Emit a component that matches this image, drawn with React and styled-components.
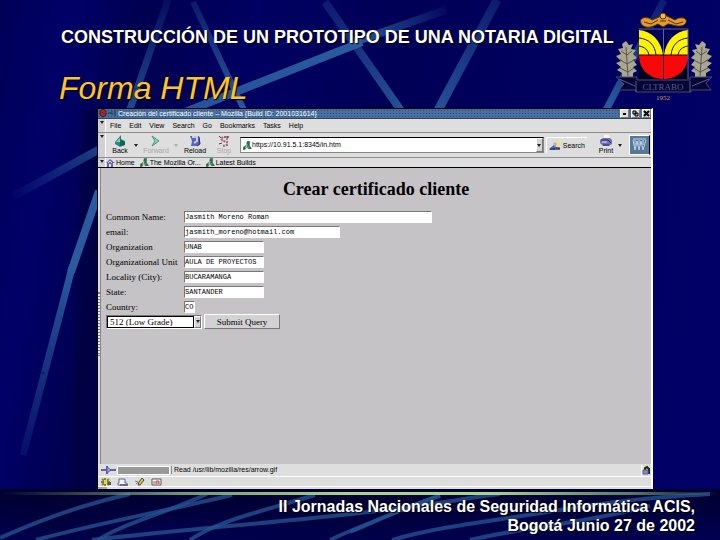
import React from 'react';
import styled, { createGlobalStyle } from 'styled-components';

const GlobalStyle = createGlobalStyle`
  * {
    box-sizing: border-box;
  }

  body {
    margin: 0;
    background: #000060;
    font-family: "Liberation Sans", Arial, sans-serif;
  }

  button, input, select {
    margin: 0;
    padding: 0;
    border-radius: 0;
    font: inherit;
    color: inherit;
  }
`;

const Slide = styled.main`
  display: flex;
  flex-direction: column;
  position: relative;
  isolation: isolate;
  min-height: 100vh;
  overflow: hidden;
  background: linear-gradient(100deg, #000058 0%, #000068 9%, #000050 18%, #000062 32%, #000056 50%, #000060 72%, #000068 100%);
`;

const Backdrop = styled.svg`
  position: absolute;
  inset: 0;
  width: 100%;
  height: 100%;
  z-index: -1;
`;

const Top = styled.header`
  display: flex;
  justify-content: space-between;
  padding: 12px 7px 4px 59px;
`;

const Headings = styled.div`
  flex: 1;
  padding-top: 14px;
  white-space: nowrap;
  text-shadow: 1px 1px 1px #000;
`;

const Heading = styled.h1`
  margin: 0 0 24px 2px;
  color: #fff;
  font-size: 18px;
  line-height: 22px;
`;

const Subheading = styled.h2`
  margin: 0;
  color: #ffc425;
  font-size: 32px;
  font-style: italic;
  font-weight: 400;
  line-height: 32px;
`;

const Crest = styled.svg`
  flex: none;
  width: 98px;
  height: 90px;
`;

/* Mozilla window */
const Window = styled.section`
  flex: 1;
  display: flex;
  flex-direction: column;
  margin: 0 67px 0 97px;
  border: 1px solid #000;
  border-right: 2px solid #fff;
  border-bottom: 0;
  background: #dedede;
  color: #000;
  font-size: 7px;
  line-height: 8px;
`;

const TitleBar = styled.div`
  display: flex;
  align-items: center;
  gap: 2px;
  height: 10px;
  padding-left: 1px;
  border-bottom: 1px solid #345;
  background-color: #476f9f;
  background-image: radial-gradient(#294f7f 30%, transparent 40%);
  background-size: 3px 3px;
  color: #fff;
`;

const WindowTitle = styled.span`
  flex: 1;
  white-space: nowrap;
`;

const WindowButton = styled.button`
  display: flex;
  width: 9px;
  height: 9px;
  border: 1px solid #777;
  border-top-color: #fff;
  border-left-color: #fff;
  background: #dedede;
`;

const Bar = styled.div`
  display: flex;
  align-items: center;
  height: ${({ $height }) => $height}px;
  border-bottom: 1px solid ${({ $line }) => $line || '#8c8c8c'};
  white-space: nowrap;
`;

const Grip = styled.span`
  display: flex;
  justify-content: center;
  align-self: stretch;
  flex: none;
  width: 8px;
  padding-top: 2px;
  border-right: 1px solid #fff;
  background: #d0d0d4;
`;

const Menu = styled.nav`
  display: flex;
  gap: 8px;
  padding-left: 4px;
`;

const PlainButton = styled.button`
  display: flex;
  align-items: center;
  gap: 2px;
  border: 0;
  background: none;
`;

const NavButton = styled(PlainButton)`
  flex-direction: column;
  gap: 0;
  width: ${({ $width }) => $width || 28}px;
  color: ${({ disabled }) => (disabled ? '#a8a8a8' : '#000')};
`;

const ArrowSlot = styled.span`
  display: flex;
  justify-content: center;
  width: ${({ $width }) => $width}px;
`;

const Address = styled.label`
  display: flex;
  align-items: center;
  flex: 1;
  height: 16px;
  margin-left: 4px;
  padding-left: 2px;
  border: 1px solid #888;
  border-top: 1px solid #000;
  background: #fff;
`;

const AddressInput = styled.input`
  flex: 1;
  min-width: 0;
  border: 0;
  outline: 0;
  background: none;
`;

const DropButton = styled.button`
  display: flex;
  align-items: center;
  justify-content: center;
  align-self: stretch;
  width: 7px;
  border: 1px solid #777;
  border-top-color: #fff;
  border-left-color: #fff;
  background: #d4d4d4;
`;

const SearchButton = styled(PlainButton)`
  height: 16px;
  margin: 0 8px 0 2px;
  padding: 0 2px;
  border-top: 1px solid #fff;
  border-left: 1px solid #fff;
`;

const Throbber = styled.span`
  display: flex;
  align-items: center;
  justify-content: center;
  width: 21px;
  height: 20px;
  margin: 0 1px 0 6px;
  border: 1px solid #fff;
  border-right: 1px solid #000;
  background: #56799b;
`;

const Bookmarks = styled.nav`
  display: flex;
  gap: 5px;
`;

const Bookmark = styled.a`
  display: flex;
  align-items: center;
  gap: 1px;
  color: #000;
  text-decoration: none;
`;

const Body = styled.div`
  flex: 1;
  display: flex;
`;

const Sidebar = styled.div`
  display: flex;
  align-items: center;
  width: 3px;
  border-right: 1px solid #888;
`;

const SidebarGrip = styled.span`
  width: 2px;
  height: 64px;
  margin-bottom: -16px;
  border-top: 1px solid #777;
  border-bottom: 1px solid #777;
  background: repeating-linear-gradient(#6f7590 0 1px, #eee 1px 3px);
`;

const Page = styled.div`
  flex: 1;
  padding: 11px 5px;
  background: #c5c3c5;
  font-family: "Liberation Serif", "Times New Roman", serif;
  font-size: 9px;
`;

const PageTitle = styled.h3`
  margin: 0 0 10px;
  font-size: 18px;
  line-height: 20px;
  text-align: center;
`;

const Field = styled.div`
  display: flex;
  align-items: center;
  height: 15px;
`;

const Label = styled.label`
  width: 78px;
  white-space: nowrap;
`;

const TextInput = styled.input`
  width: ${({ $width }) => $width}px;
  height: 12px;
  border: 1px solid #fff;
  border-top-color: #777;
  border-left-color: #777;
  background: #fff;
  font-family: "Liberation Mono", monospace;
  font-size: 7px;
  outline: 0;
`;

const Actions = styled.div`
  display: flex;
  align-items: center;
  gap: 2px;
`;

const SelectBox = styled.div`
  display: flex;
  height: 14px;
  border: 1px solid #777;
  border-right-color: #fff;
  border-bottom-color: #fff;
`;

const Select = styled.select`
  width: 87px;
  padding-left: 2px;
  border: 1px solid #000;
  background: #fff;
  appearance: none;
`;

const Submit = styled.button`
  width: 76px;
  height: 15px;
  border: 1px solid #777;
  border-top-color: #fff;
  border-left-color: #fff;
  background: #d2d2d2;
`;

const StatusBar = styled.div`
  display: flex;
  align-items: center;
  height: 13px;
  border-bottom: 1px solid #fff;
  white-space: nowrap;
`;

const Progress = styled.span`
  width: 53px;
  height: 9px;
  margin: 0 1px 0 0;
  border: 1px solid #fff;
  background: #999;
`;

const StatusText = styled.span`
  flex: 1;
  padding-left: 2px;
  border-left: 1px solid #888;
`;

const LockSlot = styled.span`
  display: flex;
  border-left: 1px solid #fff;
  background: #d5d5ec;
`;

const TaskBar = styled.div`
  display: flex;
  align-items: center;
  gap: 6px;
  height: 10px;
  padding-left: 2px;
  border-bottom: 1px solid #fff;
`;

const ResizeEdge = styled.div`
  height: 2px;
  border-left: 9px solid #a5a598;
  background: #dedede;
`;

const Rule = styled.hr`
  width: 100%;
  height: 3px;
  margin: 3px 0 0;
  border: 0;
  background: linear-gradient(90deg, transparent 0%, #6f986f 25%, #a6d48c 48%, #a6d48c 68%, #557a62 88%, transparent 100%);
`;

const Footer = styled.footer`
  padding: 2px 25px 5px;
  color: #fff;
  font-size: 16px;
  font-weight: 700;
  line-height: 19px;
  text-align: right;
  text-shadow: 1px 1px 1px #000;
`;

const rays = [
  { d: 'M168 0L129 112', w: 7, from: 0.15, to: 0.8 },
  { d: 'M193 2L245 112', w: 6, from: 0.3, to: 1 },
  { d: 'M446 10L360 40', w: 8, from: 0.1, to: 0.9 },
  { d: 'M362 42L185 112', w: 8, from: 1, to: 0.9 },
  { d: 'M100 149L14 196', w: 8, from: 0.7, to: 0.05 },
  { d: 'M325 2L402 112', w: 8, from: 0.3, to: 0.9 },
  { d: 'M497 0L437 112', w: 9, from: 0.3, to: 0.9 },
  { d: 'M664 0L605 112', w: 7, from: 0.3, to: 1 },
  { d: 'M99 191L71 272', w: 8, from: 1, to: 1 },
  { d: 'M72 268L23 455', w: 7, from: 1, to: 0.15 },
];

const lowRays = [
  'M0 538C40 520 80 505 130 494',
  'M36 540C90 525 170 510 232 495',
  'M98 540C120 525 160 515 207 494',
  'M92 540C180 530 270 523 360 513S450 500 500 494',
  'M190 540C220 520 260 512 315 495',
  'M330 540C350 530 390 515 440 495',
  'M392 540C440 526 500 520 560 510S660 497 710 494',
  'M470 540C520 528 580 524 650 506',
  'M350 532C390 515 410 505 440 496',
];

const Background = () => (
  <Backdrop viewBox="0 0 720 540" preserveAspectRatio="none" aria-hidden="true">
    <defs>
      {rays.map(({ d, from, to }, i) => {
        const [x1, y1, x2, y2] = d.match(/\d+/g);
        return (
          <linearGradient key={d} id={`ray${i}`} gradientUnits="userSpaceOnUse" x1={x1} y1={y1} x2={x2} y2={y2}>
            <stop offset="0" stopColor="#295b9e" stopOpacity={from} />
            <stop offset="1" stopColor="#295b9e" stopOpacity={to} />
          </linearGradient>
        );
      })}
      <linearGradient id="floor" x1="0" y1="0" x2="0" y2="1">
        <stop offset="0" stopColor="#000028" stopOpacity="0.9" />
        <stop offset="1" stopColor="#000040" stopOpacity="0.6" />
      </linearGradient>
    </defs>
    <path d="M82 110L97 108V490H70Z" fill="#000030" opacity="0.4" />
    {rays.map(({ d, w }, i) => (
      <path key={d} d={d} stroke={`url(#ray${i})`} strokeWidth={w} />
    ))}
    <path d="M37 373H45" stroke="#00104a" />
    <rect y="489" width="720" height="51" fill="url(#floor)" />
    {lowRays.map((d) => (
      <path key={d} d={d} fill="none" stroke="#24508f" strokeWidth="4" opacity="0.8" />
    ))}
  </Backdrop>
);

const Leaf = () => (
  <g>
    <path
      d="M10 1L13 5L17 4L15 9L20 10L17 14L21 18L17 20L21 25L17 27L21 31L17 33V37H6V33L1 30L5 27L0 23L5 21L0 16L5 14L2 9L7 8L6 4Z"
      fill="#aaa68f"
    />
    <path d="M10 7L12 36M5 11L11 15L16 11M3 19L11 24L18 20M4 28L12 32L18 28" fill="none" stroke="#55554e" />
  </g>
);

const UniversityCrest = () => (
  <Crest viewBox="0 0 98 90" role="img" aria-label="UNAB">
    <path d="M24 16H73V67H24Z" fill="#000018" />
    <path d="M24 17H73V43H24Z" fill="#00005c" />
    <path d="M24 18C36 19 46 28 48 43H24Z" fill="#fff200" />
    <path d="M73 18C61 19 51 28 49 43H73Z" fill="#fff200" />
    <path d="M24 26C34 27 40 33 41 43M24 34C30 35 33 38 34 43M73 26C63 27 57 33 56 43M73 34C67 35 64 38 63 43" fill="none" stroke="#111" />
    <path d="M24 43H73C73 58 62 67 48.500 67S24 58 24 43Z" fill="#f80808" />
    <path d="M24 43H73M48.500 17V67" stroke="#200010" />
    <path d="M24 17H73V67M48.500 17V42" fill="none" stroke="#6060a8" />
    <path d="M27 13C22 6 31 3 37 8L44 5L48 2L54 5L60 8C66 3 76 7 69 13C62 16 57 12 53 12L48 15L43 12C37 15 32 17 27 13Z" fill="#e49a24" stroke="#50300c" />
    <circle cx="48" cy="4" r="3" fill="#f0bd37" stroke="#50300c" />
    <path d="M29 10L36 12L43 8M53 8L61 12L68 10M45 9H51" fill="none" stroke="#50300c" />
    <g transform="translate(1 28)"><Leaf /></g>
    <g transform="translate(97 28) scale(-1 1)"><Leaf /></g>
    <path d="M1 65H22V68H75V65H97L91 71L96 78H76V80H21V78H4L9 72Z" fill="#050538" stroke="#4a4a68" />
    <path d="M21 69V80M75 69V80M4 67L20 74M94 67L77 74" stroke="#5d5d88" />
    <text x="48" y="78" textAnchor="middle" fontFamily="Liberation Serif, serif" fontSize="9" fill="#55558c">CLTRABO</text>
    <text x="48" y="88" textAnchor="middle" fontFamily="Liberation Serif, serif" fontSize="7" fill="#c89a55">1952</text>
  </Crest>
);

const Triangle = ({ faded }) => (
  <svg width="4" height="3" aria-hidden="true">
    <path d="M0 0H4L2 3Z" fill={faded ? '#aaa' : '#222'} />
  </svg>
);

const Lizard = () => (
  <svg width="9" height="9" viewBox="0 0 9 9" aria-hidden="true">
    <path d="M4 0H7V5L9 8H5L4 6L2 9H0V6L3 4Z" fill="#4b8971" />
    <path d="M5 1V5M2 6L1 8M7 6V8" stroke="#214c42" />
    <path d="M4 3L3 7" stroke="#b8d47e" />
  </svg>
);

const navIcons = {
  back: (
    <>
      <path d="M1 7L7 0V4L11 6V10L6 12L1 9Z" fill="#2b8a78" />
      <path d="M7 0V5L11 7V10L6 11" fill="#176052" />
      <path d="M2 7L6 3V7" fill="#7fd0b4" />
    </>
  ),
  forward: <path d="M2 1L9 6L2 11L5 6Z" fill="#8fd5ba" stroke="#3f9680" />,
  reload: (
    <>
      <path d="M1 1H10L11 9L8 11H2L3 6Z" fill="#5964b0" />
      <path d="M3 2H8V6L5 8" fill="none" stroke="#c5caf5" strokeWidth="2" />
      <path d="M10 2L11 9L8 11" fill="none" stroke="#242a68" />
    </>
  ),
  stop: (
    <>
      <path d="M11 2H5L3 4L5 6L9 7V10L5 11" fill="none" stroke="#a75d75" strokeWidth="2" strokeDasharray="2 1" />
      <path d="M1 1L3 3M1 9L4 8M9 1V5" stroke="#403c55" />
    </>
  ),
  print: (
    <>
      <path d="M4 0H9L10 4H4Z" fill="#fff9d0" />
      <path d="M0 5L3 3H10L12 5V9L9 11H3L0 8Z" fill="#6d70b7" />
      <path d="M1 5H8L11 8M3 10H9" fill="none" stroke="#292d68" />
      <path d="M2 7H7" stroke="#e5e5ff" />
    </>
  ),
};

const NavIcon = ({ name }) => (
  <svg width="12" height="12" viewBox="0 0 12 12" aria-hidden="true">{navIcons[name]}</svg>
);

const menus = ['File', 'Edit', 'View', 'Search', 'Go', 'Bookmarks', 'Tasks', 'Help'];

const fields = [
  { id: 'cn', label: 'Common Name:', value: 'Jasmith Moreno Roman', width: 248 },
  { id: 'email', label: 'email:', value: 'jasmith_moreno@hotmail.com', width: 156 },
  { id: 'o', label: 'Organization', value: 'UNAB', width: 80 },
  { id: 'ou', label: 'Organizational Unit', value: 'AULA DE PROYECTOS', width: 80 },
  { id: 'l', label: 'Locality (City):', value: 'BUCARAMANGA', width: 80 },
  { id: 'st', label: 'State:', value: 'SANTANDER', width: 80 },
  { id: 'c', label: 'Country:', value: 'CO', width: 11 },
];

const Browser = () => (
  <Window>
    <TitleBar>
      <svg width="17" height="9" viewBox="0 0 17 9" aria-hidden="true">
        <path d="M1 2L4 0L7 2V6L4 8L1 6Z" fill="#b12727" stroke="#441818" />
        <path d="M3 3L5 5M9 4H12M13 2V6M16 1V7" stroke="#1d3557" />
      </svg>
      <WindowTitle>Creación del certificado cliente – Mozilla {'{Build ID: 2001031614}'}</WindowTitle>
      <WindowButton aria-label="Minimize">
        <svg width="7" height="7"><path d="M2 3H5V5H2Z" /></svg>
      </WindowButton>
      <WindowButton aria-label="Maximize">
        <svg width="7" height="7"><path d="M1 1H4V4H1ZM3 3H6V6H3Z" fill="#aaa" stroke="#000" /></svg>
      </WindowButton>
      <WindowButton aria-label="Close">
        <svg width="7" height="7"><path d="M1 1L6 6M6 1L1 6" stroke="#000" strokeWidth="2" /></svg>
      </WindowButton>
    </TitleBar>
    <Bar $height={14}>
      <Grip><Triangle /></Grip>
      <Menu>
        {menus.map((name) => <PlainButton key={name}>{name}</PlainButton>)}
      </Menu>
    </Bar>
    <Bar $height={25}>
      <Grip><Triangle /></Grip>
      <NavButton><NavIcon name="back" />Back</NavButton>
      <ArrowSlot $width={4}><Triangle /></ArrowSlot>
      <NavButton disabled $width={36}><NavIcon name="forward" />Forward</NavButton>
      <ArrowSlot $width={4}><Triangle faded /></ArrowSlot>
      <NavButton $width={34}><NavIcon name="reload" />Reload</NavButton>
      <NavButton disabled $width={24}><NavIcon name="stop" />Stop</NavButton>
      <Address>
        <Lizard />
        <AddressInput aria-label="Address" defaultValue="https://10.91.5.1:8345/in.htm" />
        <DropButton aria-label="Show history"><Triangle /></DropButton>
      </Address>
      <SearchButton>
        <svg width="12" height="10" viewBox="0 0 12 10" aria-hidden="true">
          <path d="M6 0H11V7H6Z" fill="#eee08e" />
          <path d="M0 8L5 4L7 6L11 7V9H1Z" fill="#5361a0" />
          <path d="M4 3L6 1L8 3L6 6Z" fill="#9eaed8" />
          <path d="M1 8H6M7 7H11" stroke="#20284f" />
        </svg>
        Search
      </SearchButton>
      <NavButton $width={22}><NavIcon name="print" />Print</NavButton>
      <ArrowSlot $width={6}><Triangle /></ArrowSlot>
      <Throbber>
        <svg width="15" height="14" viewBox="0 0 15 14" role="img" aria-label="Mozilla">
          <path d="M1 2L3 12L5 3L7 12L9 3L11 12L14 2M1 1H14M3 2V7M7 2V7M11 2V7" fill="none" stroke="#c1d7e8" />
        </svg>
      </Throbber>
    </Bar>
    <Bar $height={10} $line="#000">
      <Grip><Triangle /></Grip>
      <Bookmarks>
        <Bookmark href="#home">
          <svg width="9" height="8" viewBox="0 0 9 8" aria-hidden="true">
            <path d="M0 4L4 0L9 4H7V8H5V5H3V8H1V4Z" fill="#6868b0" />
            <path d="M2 4L4 2L6 4" stroke="#deddfa" fill="none" />
          </svg>
          Home
        </Bookmark>
        <Bookmark href="#mozilla"><Lizard />The Mozilla Or...</Bookmark>
        <Bookmark href="#builds"><Lizard />Latest Builds</Bookmark>
      </Bookmarks>
    </Bar>
    <Body>
      <Sidebar><SidebarGrip /></Sidebar>
      <Page>
        <PageTitle>Crear certificado cliente</PageTitle>
        <form onSubmit={(e) => e.preventDefault()}>
          {fields.map(({ id, label, value, width }) => (
            <Field key={id}>
              <Label htmlFor={id}>{label}</Label>
              <TextInput id={id} defaultValue={value} $width={width} />
            </Field>
          ))}
          <Actions>
            <SelectBox>
              <Select aria-label="Key size">
                <option>512 (Low Grade)</option>
              </Select>
              <DropButton type="button" aria-label="Open list"><Triangle /></DropButton>
            </SelectBox>
            <Submit type="submit">Submit Query</Submit>
          </Actions>
        </form>
      </Page>
    </Body>
    <StatusBar>
      <svg width="19" height="10" viewBox="0 0 19 10" aria-hidden="true">
        <path d="M3 5H18M9 1V9" stroke="#5f62a8" strokeWidth="2" />
        <path d="M9 2L13 5L9 8Z" fill="#a7aae8" stroke="#5055a0" />
      </svg>
      <Progress />
      <StatusText>Read /usr/lib/mozilla/res/arrow.gif</StatusText>
      <LockSlot>
        <svg width="9" height="11" viewBox="0 0 9 11" aria-hidden="true">
          <path d="M0 1H9V4H0Z" fill="#eeee90" />
          <path d="M3 5V3L5 2L7 4V9" fill="none" stroke="#222" strokeWidth="2" />
          <path d="M1 5H6V9H1Z" fill="#8290c2" stroke="#555f90" />
        </svg>
      </LockSlot>
    </StatusBar>
    <TaskBar>
      <svg width="11" height="8" viewBox="0 0 11 8" aria-hidden="true">
        <path d="M2 1L9 7M9 1L2 7M1 4H10M5 0V8" stroke="#85842a" strokeWidth="2" />
        <path d="M4 2H7V6H4Z" fill="#ddd36c" />
        <path d="M8 4H11V7H8Z" fill="#555" />
      </svg>
      <svg width="11" height="8" viewBox="0 0 11 8" aria-hidden="true">
        <path d="M2 1H8V5H10V7H1V5H2Z" fill="#edf0ff" stroke="#606498" />
        <path d="M3 7H11" stroke="#303050" />
      </svg>
      <svg width="11" height="8" viewBox="0 0 11 8" aria-hidden="true">
        <path d="M1 3L4 4L2 6" fill="none" stroke="#777ba5" />
        <path d="M8 0L10 2L6 7L4 7L5 4Z" fill="#d9cf4e" stroke="#494823" />
      </svg>
      <svg width="11" height="8" viewBox="0 0 11 8" aria-hidden="true">
        <path d="M1 1H10V7H1Z" fill="#fff" stroke="#555" />
        <path d="M3 3V6M5 6V3H8V6M5 5H8" fill="none" stroke="#a34444" />
      </svg>
    </TaskBar>
    <ResizeEdge />
  </Window>
);

const App = () => {
  return (
    <>
      <GlobalStyle />
      <Slide>
        <Background />
        <Top>
          <Headings>
            <Heading>CONSTRUCCIÓN DE UN PROTOTIPO DE UNA NOTARIA DIGITAL</Heading>
            <Subheading>Forma HTML</Subheading>
          </Headings>
          <UniversityCrest />
        </Top>
        <Browser />
        <Rule />
        <Footer>
          II Jornadas Nacionales de Seguridad Informática ACIS,
          <br />
          Bogotá Junio 27 de 2002
        </Footer>
      </Slide>
    </>
  );
};

export default App;
